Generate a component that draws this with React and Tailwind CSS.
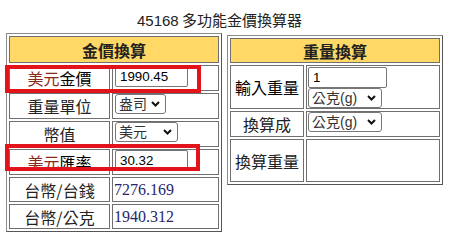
import React from 'react'

const cjk = { fontFamily: '"Noto Sans CJK TC", "Noto Sans", sans-serif' }
const ctrlFont = { fontFamily: '"Liberation Sans", Arial, "Noto Sans CJK TC", sans-serif' }

function Label({ children }) {
  return (
    <td className="border border-[#6f6f6f] text-center align-middle text-[16px] leading-none text-[#222] p-0">
      {children}
    </td>
  )
}

function Select({ w, value }) {
  return (
    <span className={`relative inline-block ${w} h-[20px] align-top`}>
      <select
        defaultValue={value}
        className="appearance-none block w-full h-full border border-[#767676] rounded-[3px] bg-white text-[14px] leading-[18px] text-[#333] pl-[3px] pr-[16px] py-0"
        style={ctrlFont}
      >
        <option>{value}</option>
      </select>
      <svg
        className="absolute right-[6px] top-[7px] pointer-events-none"
        width="9"
        height="6"
        viewBox="0 0 9 6"
      >
        <path d="M1 1 L4.5 4.5 L8 1" fill="none" stroke="#111" strokeWidth="2" />
      </svg>
    </span>
  )
}

function TextBox({ w, value }) {
  return (
    <input
      defaultValue={value}
      className={`${w} h-[21px] border border-[#767676] rounded-[2px] bg-white px-[4px] text-[13.33px] leading-none text-black align-top`}
      style={ctrlFont}
    />
  )
}

const outer =
  'w-[216px] table-fixed border-separate border-spacing-[2px] border border-t-[#8a8a8a] border-l-[#8a8a8a] border-r-[#555] border-b-[#555]'

export default function App() {
  return (
    <div className="relative w-[457px] h-[243px] bg-white text-black" style={cjk}>
      <div className="h-[33px] pt-[11px] pl-[137px] text-[15px] leading-[18px] text-[#222]">
        <span style={{ fontFamily: '"Liberation Sans", Arial, sans-serif' }}>45168</span> 多功能金價換算器
      </div>

      <div className="flex items-start pl-[6px] gap-[5px]">
        <table className={outer}>
          <colgroup>
            <col className="w-[101px]" />
            <col />
          </colgroup>
          <tbody>
            <tr>
              <th colSpan={2} className="h-[27px] border border-[#6f6f6f] bg-[#ffd865] text-[16px] font-bold leading-none text-[#222]">
                金價換算
              </th>
            </tr>
            <tr className="h-[25px]">
              <td className="border border-[#6f6f6f] text-center align-middle text-[16px] leading-none p-0">
                <span className="text-[#8b2a1a]">美元</span>金價
              </td>
              <td className="border border-[#6f6f6f] px-[2px] py-0 align-middle">
                <TextBox w="w-[73px]" value="1990.45" />
              </td>
            </tr>
            <tr className="h-[25px]">
              <Label>重量單位</Label>
              <td className="border border-[#6f6f6f] px-[2px] py-0 align-middle">
                <Select w="w-[51px]" value="盎司" />
              </td>
            </tr>
            <tr className="h-[25px]">
              <Label>幣值</Label>
              <td className="border border-[#6f6f6f] px-[2px] py-0 align-middle">
                <Select w="w-[63px]" value="美元" />
              </td>
            </tr>
            <tr className="h-[25px]">
              <td className="border border-[#6f6f6f] text-center align-middle text-[16px] leading-none p-0">
                <span className="text-[#8b2a1a]">美元</span>匯率
              </td>
              <td className="border border-[#6f6f6f] px-[2px] py-0 align-middle">
                <TextBox w="w-[73px]" value="30.32" />
              </td>
            </tr>
            <tr className="h-[25px]">
              <Label>台幣/台錢</Label>
              <td
                className="border border-[#6f6f6f] px-[1px] py-0 align-middle text-[16px] leading-none text-[#26266e]"
                style={{ fontFamily: '"Liberation Serif", "Times New Roman", serif' }}
              >
                7276.169
              </td>
            </tr>
            <tr className="h-[25px]">
              <Label>台幣/公克</Label>
              <td
                className="border border-[#6f6f6f] px-[1px] py-0 align-middle text-[16px] leading-none text-[#26266e]"
                style={{ fontFamily: '"Liberation Serif", "Times New Roman", serif' }}
              >
                1940.312
              </td>
            </tr>
          </tbody>
        </table>

        <table className={`mt-[2px] ${outer}`}>
          <colgroup>
            <col className="w-[74px]" />
            <col />
          </colgroup>
          <tbody>
            <tr>
              <th colSpan={2} className="h-[25px] border border-[#6f6f6f] bg-[#ffd865] text-[16px] font-bold leading-none text-[#222]">
                重量換算
              </th>
            </tr>
            <tr className="h-[44px]">
              <td className="border border-[#6f6f6f] text-center align-middle text-[16px] leading-none p-0">
                輸入重量
              </td>
              <td className="border border-[#6f6f6f] px-[1px] py-0 align-middle">
                <div className="flex flex-col items-start">
                  <TextBox w="w-[79px]" value="1" />
                  <Select w="w-[74px]" value="公克(g)" />
                </div>
              </td>
            </tr>
            <tr className="h-[25px]">
              <Label>換算成</Label>
              <td className="border border-[#6f6f6f] px-[1px] py-0 align-middle">
                <Select w="w-[74px]" value="公克(g)" />
              </td>
            </tr>
            <tr className="h-[43px]">
              <Label>換算重量</Label>
              <td className="border border-[#6f6f6f] p-0"></td>
            </tr>
          </tbody>
        </table>
      </div>

      {/* red annotation boxes */}
      <div className="absolute left-[5px] top-[65px] w-[196px] h-[28px] border-[4px] border-[#e3131b] pointer-events-none" />
      <div className="absolute left-[5px] top-[144px] w-[195px] h-[27px] border-[4px] border-[#e3131b] pointer-events-none" />
    </div>
  )
}
